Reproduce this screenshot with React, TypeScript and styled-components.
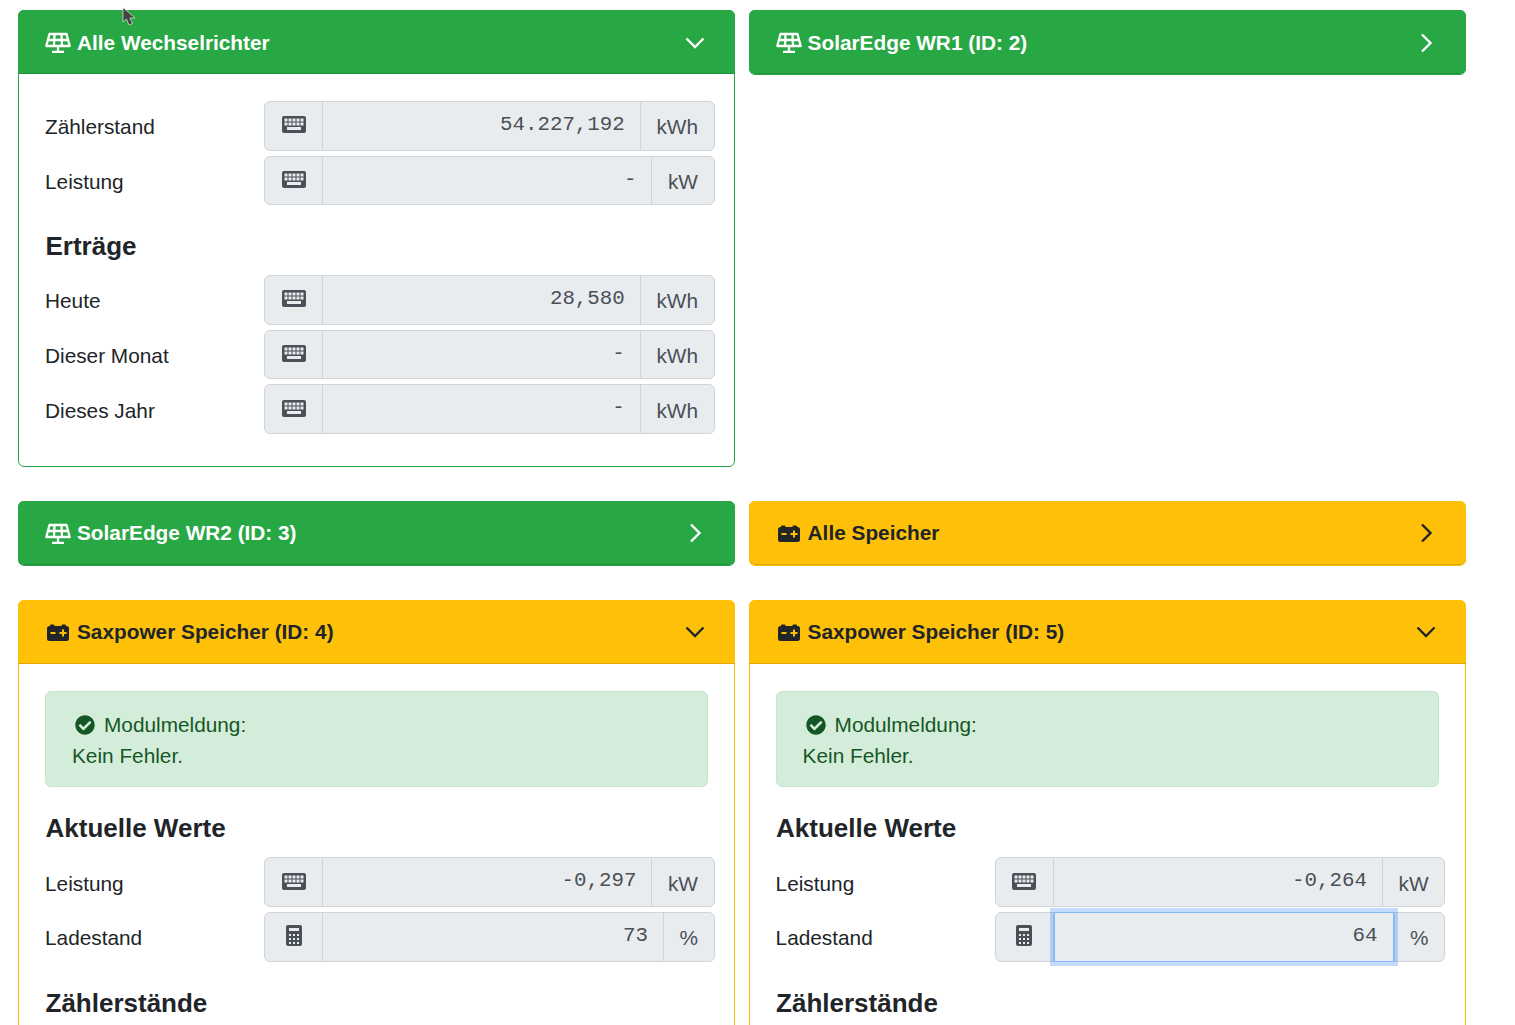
import React from 'react';
import styled, { createGlobalStyle } from 'styled-components';
import { FaCheckCircle } from 'react-icons/fa';

const GlobalStyle = createGlobalStyle`
  html, body {
    margin: 0;
    height: 100%;
    overflow: hidden;
    background: #fff;
  }
  body {
    font-family: "Liberation Sans", Arial, sans-serif;
    color: #212529;
  }
`;

const Page = styled.div`
  position: relative;
  height: 1025px;
  overflow: hidden;
  padding: 10px 49px 0 18px;
  box-sizing: border-box;
`;

const Columns = styled.div`
  display: grid;
  grid-template-columns: 717px 717px;
  column-gap: 13.6px;
  row-gap: 34px;
  align-items: start;
`;

const Card = styled.section<{ $color: string }>`
  border: 1px solid ${(p) => p.$color};
  border-radius: 6px;
  background: #fff;
  box-sizing: border-box;
`;

const CardHeader = styled.header<{ $color: string; $dark?: boolean; $open?: boolean }>`
  display: flex;
  align-items: center;
  height: 64px;
  box-sizing: border-box;
  margin: -1px -1px 0;
  padding: 2px 30px 0 27px;
  background: ${(p) => p.$color};
  color: ${(p) => (p.$dark ? '#212529' : '#fff')};
  border-radius: ${(p) => (p.$open ? '6px 6px 0 0' : '6px')};
  border-bottom: 1px solid rgba(0, 0, 0, 0.125);
  font-size: 20.8px;
  font-weight: 700;
`;

const HeaderIcon = styled.span`
  display: flex;
  justify-content: center;
  width: 26px;
  margin-right: 6px;
`;

const HeaderTitle = styled.span`
  flex: 1;
`;

const CardBody = styled.div`
  padding: 27px 26px 27px;
`;

const FormRow = styled.div`
  display: grid;
  grid-template-columns: 219px 450.6px;
  align-items: center;
  margin-bottom: 5px;
`;

const Label = styled.label`
  padding-top: 3px;
  font-size: 20.8px;
`;

const InputGroup = styled.div`
  display: flex;
  height: 49.6px;
  box-sizing: border-box;
  border: 1px solid #ced4da;
  border-radius: 6px;
  background: #e9ecef;
  color: #495057;
`;

const IconAddon = styled.span`
  display: flex;
  align-items: center;
  justify-content: center;
  width: 58px;
  padding-bottom: 2px;
  box-sizing: border-box;
  border-right: 1px solid #ced4da;
`;

const ValueField = styled.span<{ $focused?: boolean }>`
  flex: 1;
  padding: 9px 15px 0 0;
  box-sizing: border-box;
  text-align: right;
  font-family: "Liberation Mono", monospace;
  font-size: 20.8px;
  line-height: 28px;
  ${(p) =>
    p.$focused &&
    `
    margin: -1px 0;
    border: 1px solid #86b7fe;
    box-shadow: 0 0 0 4px rgba(13, 110, 253, 0.25);
    position: relative;
  `}
`;

const UnitAddon = styled.span`
  display: flex;
  align-items: center;
  padding: 3px 15.6px 0;
  border-left: 1px solid #ced4da;
  font-size: 20.8px;
`;

const SectionTitle = styled.h3`
  margin: 23px 0 11px;
  padding-left: 0.5px;
  font-size: 26px;
  line-height: 36px;
  font-weight: 700;
`;

const Alert = styled.div`
  padding: 17px 26px 15px;
  margin-bottom: 22.5px;
  background: #d4edda;
  border: 1px solid #c3e6cb;
  border-radius: 6px;
  color: #155724;
  font-size: 20.8px;
  line-height: 31.2px;
`;

const AlertIcon = styled.span`
  display: inline-flex;
  margin: 0 9px 0 3px;
  vertical-align: -3px;
`;

const ChevronBox = styled.span`
  display: flex;
  justify-content: center;
  width: 20px;
`;

const Cursor = styled.svg`
  position: absolute;
  left: 122px;
  top: 7px;
`;

const SolarIcon = () => (
  <svg width="26" height="21" viewBox="0 0 26 21" fill="none" stroke="currentColor" strokeWidth="2.3" strokeLinejoin="round">
    <path d="M4.500 2h17l3.200 12H1.300z" />
    <path d="M9.500 2 9 14M16.500 2l.5 12M3 8h20M13 14v6M7 20h12" />
  </svg>
);

const KeyboardIcon = () => (
  <svg width="24" height="17" viewBox="0 0 24 17">
    <path
      fill="currentColor"
      fillRule="evenodd"
      d="M2 0h20a2 2 0 0 1 2 2v13a2 2 0 0 1-2 2H2a2 2 0 0 1-2-2V2a2 2 0 0 1 2-2zM2.500 2.500v3h3v-3zM6.500 2.500v3h3v-3zM10.500 2.500v3h3v-3zM14.500 2.500v3h3v-3zM18.500 2.500v3h3v-3zM2.500 6.500v3h3v-3zM6.500 6.500v3h3v-3zM10.500 6.500v3h3v-3zM14.500 6.500v3h3v-3zM18.500 6.500v3h3v-3zM5 11v3h14v-3z"
    />
  </svg>
);

const CalculatorIcon = () => (
  <svg width="16" height="21" viewBox="0 0 16 21">
    <path
      fill="currentColor"
      fillRule="evenodd"
      d="M2 0h12a2 2 0 0 1 2 2v17a2 2 0 0 1-2 2H2a2 2 0 0 1-2-2V2a2 2 0 0 1 2-2zM3 3v3h10V3zM3 9v2h2V9zM7 9v2h2V9zM11 9v2h2V9zM3 13v2h2v-2zM7 13v2h2v-2zM11 13v2h2v-2zM3 17v2h2v-2zM7 17v2h2v-2zM11 17v2h2v-2z"
    />
  </svg>
);

const BatteryIcon = () => (
  <svg width="22" height="17" viewBox="0 0 22 17">
    <path
      fill="currentColor"
      fillRule="evenodd"
      d="M4 .5h2.500a1 1 0 0 1 1 1V2h7v-.5a1 1 0 0 1 1-1H18a1 1 0 0 1 1 1V2h.5A2.500 2.500 0 0 1 22 4.500v10a2.500 2.500 0 0 1-2.500 2.500h-17A2.500 2.500 0 0 1 0 14.500v-10A2.500 2.500 0 0 1 2.500 2H3v-.5a1 1 0 0 1 1-1zM3.500 8v2h5V8zM15 5.500V8h-2.500v2H15v2.500h2V10h2.500V8H17V5.500z"
    />
  </svg>
);

const Chevron = ({ open }: { open?: boolean }) => (
  <ChevronBox>
    {open ? (
      <svg width="20" height="12" viewBox="0 0 20 12" fill="none" stroke="currentColor" strokeWidth="2.4">
        <path d="M1.5 1.5 10 10l8.5-8.5" />
      </svg>
    ) : (
      <svg width="14" height="20" viewBox="0 0 14 20" fill="none" stroke="currentColor" strokeWidth="2.4">
        <path d="M3 1.500 11.500 10 3 18.500" />
      </svg>
    )}
  </ChevronBox>
);

type RowProps = {
  label: string;
  value: string;
  unit: string;
  calc?: boolean;
  focused?: boolean;
};

const ValueRow = ({ label, value, unit, calc, focused }: RowProps) => (
  <FormRow>
    <Label>{label}</Label>
    <InputGroup>
      <IconAddon>{calc ? <CalculatorIcon /> : <KeyboardIcon />}</IconAddon>
      <ValueField $focused={focused}>{value}</ValueField>
      <UnitAddon>{unit}</UnitAddon>
    </InputGroup>
  </FormRow>
);

const GREEN = '#28a745';
const YELLOW = '#ffc107';

const ClosedCard = ({ color, dark, icon, title }: { color: string; dark?: boolean; icon: React.ReactNode; title: string }) => (
  <Card $color={color}>
    <CardHeader $color={color} $dark={dark}>
      <HeaderIcon>{icon}</HeaderIcon>
      <HeaderTitle>{title}</HeaderTitle>
      <Chevron />
    </CardHeader>
  </Card>
);

const SpeicherCard = ({ id, power, soc, focused }: { id: number; power: string; soc: string; focused?: boolean }) => (
  <Card $color={YELLOW}>
    <CardHeader $color={YELLOW} $dark $open>
      <HeaderIcon>
        <BatteryIcon />
      </HeaderIcon>
      <HeaderTitle>Saxpower Speicher (ID: {id})</HeaderTitle>
      <Chevron open />
    </CardHeader>
    <CardBody>
      <Alert>
        <AlertIcon>
          <FaCheckCircle size={20} />
        </AlertIcon>
        Modulmeldung:
        <br />
        Kein Fehler.
      </Alert>
      <SectionTitle>Aktuelle Werte</SectionTitle>
      <ValueRow label="Leistung" value={power} unit="kW" />
      <ValueRow label="Ladestand" value={soc} unit="%" calc focused={focused} />
      <SectionTitle>Zählerstände</SectionTitle>
    </CardBody>
  </Card>
);

export default function App() {
  return (
    <Page>
      <GlobalStyle />
      <Columns>
        <Card $color={GREEN}>
          <CardHeader $color={GREEN} $open>
            <HeaderIcon>
              <SolarIcon />
            </HeaderIcon>
            <HeaderTitle>Alle Wechselrichter</HeaderTitle>
            <Chevron open />
          </CardHeader>
          <CardBody>
            <ValueRow label="Zählerstand" value="54.227,192" unit="kWh" />
            <ValueRow label="Leistung" value="-" unit="kW" />
            <SectionTitle>Erträge</SectionTitle>
            <ValueRow label="Heute" value="28,580" unit="kWh" />
            <ValueRow label="Dieser Monat" value="-" unit="kWh" />
            <ValueRow label="Dieses Jahr" value="-" unit="kWh" />
          </CardBody>
        </Card>
        <ClosedCard color={GREEN} icon={<SolarIcon />} title="SolarEdge WR1 (ID: 2)" />
        <ClosedCard color={GREEN} icon={<SolarIcon />} title="SolarEdge WR2 (ID: 3)" />
        <ClosedCard color={YELLOW} dark icon={<BatteryIcon />} title="Alle Speicher" />
        <SpeicherCard id={4} power="-0,297" soc="73" />
        <SpeicherCard id={5} power="-0,264" soc="64" focused />
      </Columns>
      <Cursor width="14" height="20" viewBox="0 0 14 20">
        <path d="M1 .5V15l3.500-3 2.500 6 3.500-1.500L8 11h5z" fill="#444" stroke="#fff" strokeWidth="0.6" />
      </Cursor>
    </Page>
  );
}
